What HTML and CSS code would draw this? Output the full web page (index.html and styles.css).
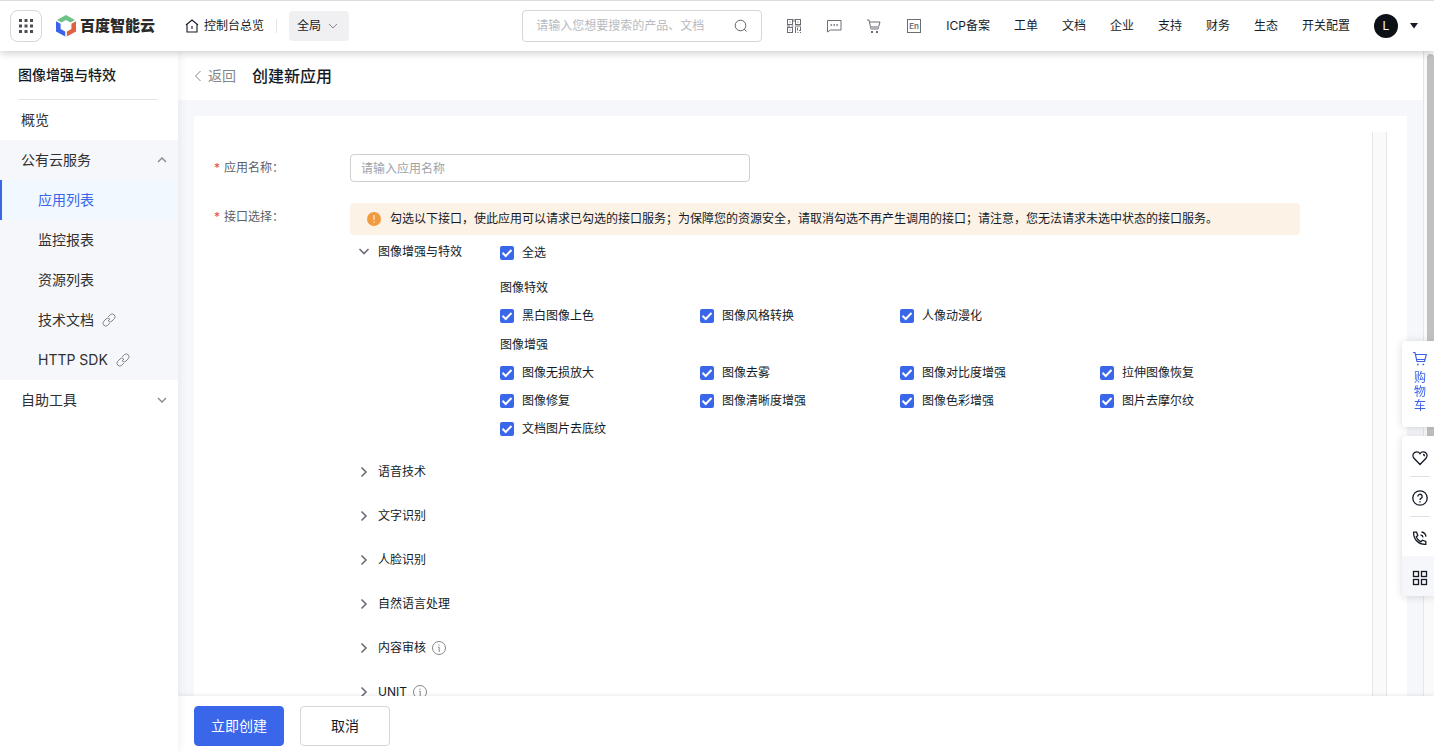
FILE: index.html
```html
<!DOCTYPE html>
<html lang="zh-CN">
<head>
    <meta charset="UTF-8">
    <meta name="viewport" content="width=device-width, initial-scale=1.0">
    <title>创建新应用 - 百度智能云</title>
    <link rel="stylesheet" href="styles.css">
</head>
<body>

<header class="header">
    <button class="apps-btn" type="button" aria-label="产品导航">
        <svg width="16" height="16" viewBox="0 0 16 16" fill="#4a4c52">
            <rect x="1" y="1" width="3" height="3"/><rect x="6.500" y="1" width="3" height="3"/><rect x="12" y="1" width="3" height="3"/>
            <rect x="1" y="6.500" width="3" height="3"/><rect x="6.500" y="6.500" width="3" height="3"/><rect x="12" y="6.500" width="3" height="3"/>
            <rect x="1" y="12" width="3" height="3"/><rect x="6.500" y="12" width="3" height="3"/><rect x="12" y="12" width="3" height="3"/>
        </svg>
    </button>
    <a href="#" class="logo">
        <svg width="20" height="22" viewBox="0 0 20 22">
            <path fill="#6cc287" d="M10 0l9 5-4.500 2.500L10 5 5.500 7.500 1 5z"/>
            <path fill="#3a62ea" d="M0 6.200l4.600 2.600v5.200L9.200 16.600v5L0 16.400z"/>
            <path fill="#e0603f" d="M20 6.200l-4.600 2.600v5.200l-4.600 2.600v5L20 16.400z"/>
        </svg>
        <span>百度智能云</span>
    </a>
    <a href="#" class="console-link">
        <svg width="14" height="14" viewBox="0 0 14 14" fill="none" stroke="#151b26" stroke-width="1.100">
            <path d="M1 6l6-5 6 5M2 5.500v7.500h10V5.500M7 7v3"/>
        </svg>
        控制台总览
    </a>
    <span class="header-line"></span>
    <button class="region-btn" type="button">
        全局
        <svg width="10" height="6" viewBox="0 0 10 6" fill="none" stroke="#84868c"><path d="M1 1l4 4 4-4"/></svg>
    </button>

    <div class="header-right">
        <div class="search">
            <input type="text" aria-label="搜索" placeholder="请输入您想要搜索的产品、文档">
            <svg width="14" height="14" viewBox="0 0 14 14" fill="none" stroke="#5c5f66"><circle cx="6.500" cy="6.500" r="5.300"/><path d="M10.300 10.300l2.200 2.200"/></svg>
        </div>
        <a href="#" aria-label="二维码">
            <svg width="16" height="16" viewBox="0 0 16 16" fill="none" stroke="#6b6e76">
                <rect x="1.500" y="1.500" width="5" height="5"/><rect x="9.500" y="1.500" width="5" height="5"/><rect x="1.500" y="9.500" width="5" height="5"/>
                <path d="M3.500 4h1M11.500 4h1M3.500 12h1M1 8h3M5.500 8h2M9 8h6M8 1v3M9.500 9v6M11.500 9.500v3M14.500 9v4M11.500 14.500h1M13 12.500h2M14.500 14v1"/>
            </svg>
        </a>
        <a href="#" aria-label="消息">
            <svg width="16" height="16" viewBox="0 0 16 16" fill="none" stroke="#6b6e76">
                <path d="M1.500 2.500h13.500v9.500H4.500l-3 2z"/><path stroke-width="1.600" d="M4.500 7h1.600M7.400 7h1.600M10.300 7h1.600"/>
            </svg>
        </a>
        <a href="#" aria-label="购物车">
            <svg width="16" height="16" viewBox="0 0 16 16" fill="none" stroke="#6b6e76">
                <path d="M1 2h2l2 9h7l2-7H3.500"/><path fill="#b0b2b7" stroke="none" d="M4.500 8h8.500l-1 3H5z"/><path stroke-width="2" d="M5 14h2M10 14h2"/>
            </svg>
        </a>
        <a href="#" aria-label="English">
            <svg width="16" height="16" viewBox="0 0 16 16" fill="none" stroke="#6b6e76">
                <rect x="1.500" y="1.500" width="13" height="13"/>
                <text x="8" y="11" text-anchor="middle" font-size="8" fill="#6b6e76" stroke="none" font-weight="600">En</text>
            </svg>
        </a>
        <a href="#">ICP备案</a>
        <a href="#">工单</a>
        <a href="#">文档</a>
        <a href="#">企业</a>
        <a href="#">支持</a>
        <a href="#">财务</a>
        <a href="#">生态</a>
        <a href="#">开关配置</a>
        <button class="user-btn" type="button" aria-label="账户">
            <span class="avatar">L</span>
            <svg width="10" height="6" viewBox="0 0 10 6" fill="#151b26"><path d="M1 0h8L5 5.500z"/></svg>
        </button>
    </div>
</header>

<div class="layout">
    <aside class="sidebar">
        <h2>图像增强与特效</h2>
        <nav>
            <a href="#" class="menu-item">概览</a>
            <div class="menu-group">
                <button type="button" class="menu-item">公有云服务
                    <svg width="10" height="6" viewBox="0 0 10 6" fill="none" stroke="#84868c" stroke-width="1.300"><path d="M1 5l4-4 4 4"/></svg>
                </button>
                <a href="#" class="sub-item active">应用列表</a>
                <a href="#" class="sub-item">监控报表</a>
                <a href="#" class="sub-item">资源列表</a>
                <a href="#" class="sub-item">技术文档
                    <svg width="14" height="14" viewBox="0 0 14 14" fill="none" stroke="#84868c"><path d="M6 4l2.200-2.200a2.700 2.700 0 0 1 4 4L10 8a2.700 2.700 0 0 1-3.500.300M8 10l-2.200 2.200a2.700 2.700 0 0 1-4-4L4 6a2.700 2.700 0 0 1 3.500-.300M6 8l2-2"/></svg>
                </a>
                <a href="#" class="sub-item">HTTP SDK
                    <svg width="14" height="14" viewBox="0 0 14 14" fill="none" stroke="#84868c"><path d="M6 4l2.200-2.200a2.700 2.700 0 0 1 4 4L10 8a2.700 2.700 0 0 1-3.500.300M8 10l-2.200 2.200a2.700 2.700 0 0 1-4-4L4 6a2.700 2.700 0 0 1 3.500-.300M6 8l2-2"/></svg>
                </a>
            </div>
            <button type="button" class="menu-item">自助工具
                <svg width="10" height="6" viewBox="0 0 10 6" fill="none" stroke="#84868c" stroke-width="1.300"><path d="M1 1l4 4 4-4"/></svg>
            </button>
        </nav>
    </aside>

    <main class="main">
        <div class="scroll-area">
            <div class="content">
                <div class="page-head">
                    <a href="#" class="back">
                        <svg width="8" height="12" viewBox="0 0 8 12" fill="none" stroke="#84868c"><path d="M6.500 1L1.500 6l5 5"/></svg>
                        返回
                    </a>
                    <h1>创建新应用</h1>
                </div>
                <div class="page-body">
                    <div class="panel">
                        <form class="app-form">
                            <div class="form-row">
                                <label class="form-label" for="app-name"><i>*</i>应用名称：</label>
                                <input class="name-input" id="app-name" type="text" placeholder="请输入应用名称">
                            </div>
                            <div class="form-row">
                                <span class="form-label"><i>*</i>接口选择：</span>
                                <div class="form-control">
                                    <p class="alert">
                                        <svg width="14" height="14" viewBox="0 0 14 14"><circle cx="7" cy="7" r="7" fill="#f19a40"/><path stroke="#fdf2e6" stroke-width="1.200" d="M7 3v5M7 9.500v1.300"/></svg>
                                        勾选以下接口，使此应用可以请求已勾选的接口服务；为保障您的资源安全，请取消勾选不再产生调用的接口；请注意，您无法请求未选中状态的接口服务。
                                    </p>
                                    <div class="api-group">
                                        <button type="button" class="api-title">
                                            <svg width="12" height="12" viewBox="0 0 12 12" fill="none" stroke="#6b6e76" stroke-width="1.600"><path d="M1.500 3l4.500 4.500L10.500 3"/></svg>
                                            图像增强与特效
                                        </button>
                                        <div class="api-list">
                                            <label class="check all"><input type="checkbox" checked>全选</label>
                                            <h4>图像特效</h4>
                                            <div class="checks">
                                                <label class="check"><input type="checkbox" checked>黑白图像上色</label>
                                                <label class="check"><input type="checkbox" checked>图像风格转换</label>
                                                <label class="check"><input type="checkbox" checked>人像动漫化</label>
                                            </div>
                                            <h4>图像增强</h4>
                                            <div class="checks">
                                                <label class="check"><input type="checkbox" checked>图像无损放大</label>
                                                <label class="check"><input type="checkbox" checked>图像去雾</label>
                                                <label class="check"><input type="checkbox" checked>图像对比度增强</label>
                                                <label class="check"><input type="checkbox" checked>拉伸图像恢复</label>
                                                <label class="check"><input type="checkbox" checked>图像修复</label>
                                                <label class="check"><input type="checkbox" checked>图像清晰度增强</label>
                                                <label class="check"><input type="checkbox" checked>图像色彩增强</label>
                                                <label class="check"><input type="checkbox" checked>图片去摩尔纹</label>
                                                <label class="check"><input type="checkbox" checked>文档图片去底纹</label>
                                            </div>
                                        </div>
                                    </div>
                                    <button type="button" class="api-title"><svg width="12" height="12" viewBox="0 0 12 12" fill="none" stroke="#6b6e76" stroke-width="1.600"><path d="M3.500 1.500L8 6l-4.500 4.500"/></svg>语音技术</button>
                                    <button type="button" class="api-title"><svg width="12" height="12" viewBox="0 0 12 12" fill="none" stroke="#6b6e76" stroke-width="1.600"><path d="M3.500 1.500L8 6l-4.500 4.500"/></svg>文字识别</button>
                                    <button type="button" class="api-title"><svg width="12" height="12" viewBox="0 0 12 12" fill="none" stroke="#6b6e76" stroke-width="1.600"><path d="M3.500 1.500L8 6l-4.500 4.500"/></svg>人脸识别</button>
                                    <button type="button" class="api-title"><svg width="12" height="12" viewBox="0 0 12 12" fill="none" stroke="#6b6e76" stroke-width="1.600"><path d="M3.500 1.500L8 6l-4.500 4.500"/></svg>自然语言处理</button>
                                    <button type="button" class="api-title"><svg width="12" height="12" viewBox="0 0 12 12" fill="none" stroke="#6b6e76" stroke-width="1.600"><path d="M3.500 1.500L8 6l-4.500 4.500"/></svg>内容审核
                                        <svg class="info" width="14" height="14" viewBox="0 0 14 14" fill="none" stroke="#84868c"><circle cx="7" cy="7" r="6.500"/><path d="M7 3.500v1.200M6 6.300h1.200V11"/></svg>
                                    </button>
                                    <button type="button" class="api-title"><svg width="12" height="12" viewBox="0 0 12 12" fill="none" stroke="#6b6e76" stroke-width="1.600"><path d="M3.500 1.500L8 6l-4.500 4.500"/></svg>UNIT
                                        <svg class="info" width="14" height="14" viewBox="0 0 14 14" fill="none" stroke="#84868c"><circle cx="7" cy="7" r="6.500"/><path d="M7 3.500v1.200M6 6.300h1.200V11"/></svg>
                                    </button>
                                </div>
                            </div>
                        </form>
                        <div class="panel-track"></div>
                    </div>
                </div>
            </div>
            <div class="page-track"><div class="page-thumb"></div></div>
        </div>
        <div class="action-bar">
            <button type="button" class="btn primary">立即创建</button>
            <button type="button" class="btn">取消</button>
        </div>
    </main>
</div>

<div class="float-tools">
    <a href="#" class="cart">
        <svg width="14" height="16" viewBox="0 0 14 16" fill="none" stroke="#3a62ea" stroke-width="1.200"><path d="M0 1.500h2l2 9h7.500L13.300 3.500H2.500M4 8.500h8"/><path stroke-width="1.600" d="M4 13.500h1.600M9.500 13.500h1.600"/></svg>
        <span>购</span><span>物</span><span>车</span>
    </a>
    <div class="tools">
        <a href="#" aria-label="收藏"><svg width="16" height="16" viewBox="0 0 16 16" fill="none" stroke="#151b26" stroke-width="1.300"><path d="M8 14.500L2 8.300C-.5 5 2 1.800 4.800 1.800c1.400 0 2.500.700 3.200 1.800.700-1.100 1.800-1.800 3.200-1.800C14 1.800 16.500 5 14 8.300zM11 4.500c1 0 1.500.800 1.500 1.700"/></svg></a>
        <a href="#" aria-label="帮助"><svg width="16" height="16" viewBox="0 0 16 16" fill="none" stroke="#151b26" stroke-width="1.300"><circle cx="8" cy="8" r="7.200"/><path d="M5.800 6.500a2.200 2.200 0 1 1 3.300 1.900c-.8.500-1.100.8-1.100 1.600M8 11.200v1.200"/></svg></a>
        <a href="#" aria-label="电话"><svg width="16" height="16" viewBox="0 0 16 16" fill="none" stroke="#151b26" stroke-width="1.300"><path d="M1.600 2.200h3l1.200 3.300-1.600 1.400c.8 2.300 2.600 4 4.700 4.900l1.500-1.600 3.400 1.300v2.800C7 14.900 1.300 9.500 1.600 2.200zM8.500 4.800c1.500.2 2.400 1.100 2.600 2.600M9.500 2c2.700.4 4.200 2 4.500 4.600"/></svg></a>
        <a href="#" class="grid" aria-label="更多"><svg width="16" height="16" viewBox="0 0 16 16" fill="none" stroke="#151b26" stroke-width="1.300"><rect x="1.500" y="1.500" width="5" height="5"/><rect x="9.500" y="1.500" width="5" height="5"/><rect x="1.500" y="9.500" width="5" height="5"/><rect x="9.500" y="9.500" width="5" height="5"/></svg></a>
    </div>
</div>

</body>
</html>
```

FILE: styles.css
```css
* {
    box-sizing: border-box;
}
body {
    margin: 0;
    height: 100vh;
    display: flex;
    flex-direction: column;
    overflow: hidden;
    font-family: Inter, "Noto Sans CJK SC", sans-serif;
    font-size: 12px;
    line-height: 20px;
    color: #151b26;
    background-color: #f6f7fa;
}
a {
    color: inherit;
    text-decoration: none;
}
button, input {
    font: inherit;
    color: inherit;
}
button {
    padding: 0;
    border: none;
    background: none;
    cursor: pointer;
}
svg {
    display: block;
    flex-shrink: 0;
}
h1, h2, h4, p {
    margin: 0;
}

/* header */
.header {
    position: relative;
    z-index: 3;
    display: flex;
    align-items: center;
    height: 51px;
    padding: 0 15px 0 10px;
    border-top: 1px solid #dcdcdc;
    background-color: #fff;
    box-shadow: 0 2px 8px rgba(0, 0, 0, 0.2);
    white-space: nowrap;
    flex-shrink: 0;
}
.apps-btn {
    display: flex;
    align-items: center;
    justify-content: center;
    width: 32px;
    height: 32px;
    border: 1px solid #d4d6d9;
    border-radius: 8px;
}
.logo {
    display: flex;
    align-items: center;
    gap: 4px;
    margin-left: 14px;
    font-size: 15px;
    font-weight: 900;
    color: #2b2b2b;
}
.console-link {
    display: flex;
    align-items: center;
    gap: 5px;
    margin-left: 30px;
}
.header-line {
    width: 1px;
    height: 14px;
    margin: 0 12px;
    background-color: #e4e5e8;
}
.region-btn {
    display: flex;
    align-items: center;
    gap: 7px;
    height: 30px;
    padding: 0 11px 0 8px;
    border-radius: 4px;
    background-color: #f0f0f2;
}
.header-right {
    display: flex;
    align-items: center;
    gap: 24px;
    margin-left: auto;
}
.search {
    display: flex;
    align-items: center;
    width: 240px;
    height: 32px;
    padding: 0 13px;
    border: 1px solid #d4d6d9;
    border-radius: 4px;
}
.search input {
    flex: 1;
    min-width: 0;
    padding: 0;
    border: none;
    outline: none;
}
.search input::placeholder {
    color: #b8babf;
}
.user-btn {
    display: flex;
    align-items: center;
    gap: 11px;
}
.avatar {
    width: 24px;
    height: 24px;
    border-radius: 50%;
    background-color: #0d1016;
    color: #fff;
    line-height: 24px;
}

/* sidebar */
.layout {
    display: flex;
    flex: 1;
    min-height: 0;
}
.sidebar {
    position: relative;
    z-index: 2;
    width: 178px;
    flex-shrink: 0;
    background-color: #fff;
    box-shadow: 0 0 10px rgba(0, 0, 0, 0.08);
    font-size: 14px;
    color: #303030;
}
.sidebar h2 {
    height: 49px;
    margin: 0 20px 0 18px;
    border-bottom: 1px solid #e4e5e8;
    font-size: 14px;
    font-weight: 500;
    line-height: 48px;
    color: #151b26;
}
.menu-item {
    display: flex;
    align-items: center;
    justify-content: space-between;
    width: 100%;
    height: 40px;
    padding: 0 11px 0 21px;
}
.menu-group {
    background-color: #f6f7fb;
}
.sub-item {
    display: flex;
    align-items: center;
    gap: 8px;
    height: 40px;
    padding-left: 38px;
}
.sub-item.active {
    padding-left: 36px;
    border-left: 2px solid #3a66ea;
    background-color: #f2f8ff;
    color: #3a66ea;
}

/* main */
.main {
    display: flex;
    flex-direction: column;
    flex: 1;
    min-width: 0;
}
.scroll-area {
    display: flex;
    flex: 1;
    min-height: 0;
    overflow: hidden;
}
.content {
    display: flex;
    flex-direction: column;
    flex: 1;
    min-width: 0;
}
.page-head {
    display: flex;
    align-items: center;
    gap: 16px;
    height: 49px;
    padding: 0 16px;
    background-color: #fff;
    flex-shrink: 0;
}
.back {
    display: flex;
    align-items: center;
    gap: 6px;
    font-size: 14px;
    color: #84868c;
}
.page-head h1 {
    font-size: 16px;
    font-weight: 500;
}
.page-body {
    display: flex;
    flex: 1;
    min-height: 0;
    padding: 16px 16px 0;
    background-color: #f6f7fa;
}
.panel {
    display: flex;
    flex: 1;
    min-width: 0;
    padding: 16px 20px 0;
    background-color: #fff;
}
.panel-track {
    width: 15px;
    border: 1px solid #e6e6e6;
    border-width: 0 1px;
    background-color: #fafafa;
}
.page-track {
    width: 11px;
    padding: 3px 0 0 3px;
    border-left: 1px solid #e6e6e6;
    background-color: #fafafa;
}
.page-thumb {
    height: 60%;
    border-radius: 4px 4px 0 0;
    background-color: #c1c1c1;
}

/* form */
.app-form {
    flex: 1;
    min-width: 0;
    padding-top: 22px;
}
.form-row {
    display: flex;
    align-items: flex-start;
    margin-bottom: 21px;
}
.form-label {
    width: 136px;
    padding-top: 4px;
    color: #5c5f66;
    flex-shrink: 0;
}
.form-label i {
    display: inline-block;
    width: 10px;
    font-style: normal;
    color: #e5484d;
}
.name-input {
    width: 400px;
    height: 28px;
    padding: 0 10px;
    border: 1px solid #cfcfd2;
    border-radius: 4px;
}
.name-input::placeholder {
    color: #a0a2a8;
}
.form-control {
    flex: 1;
    max-width: 950px;
}
.alert {
    display: flex;
    align-items: center;
    gap: 9px;
    min-height: 32px;
    padding: 0 17px;
    border-radius: 4px;
    background-color: #fdf2e6;
}
.api-title {
    display: flex;
    align-items: center;
    gap: 8px;
    height: 44px;
    padding-left: 8px;
}
.info {
    margin-left: -2px;
}
.api-group {
    display: flex;
    padding: 4px 0 7px;
}
.api-group .api-title {
    width: 150px;
    height: 26px;
}
.api-list {
    flex: 1;
}
.api-list h4 {
    padding-top: 1px;
    font-size: 12px;
    font-weight: 400;
    line-height: 28px;
}
.checks {
    display: grid;
    grid-template-columns: repeat(auto-fill, 200px);
}
.check {
    display: flex;
    align-items: center;
    gap: 8px;
    height: 28px;
}
.check.all {
    margin-bottom: 6px;
}
.check input {
    appearance: none;
    width: 14px;
    height: 14px;
    margin: 0;
    border: 1px solid #cfcfd2;
    border-radius: 2px;
}
.check input:checked {
    border: none;
    background: #3a66ea url("data:image/svg+xml,%3Csvg xmlns='http://www.w3.org/2000/svg' viewBox='0 0 14 14'%3E%3Cpath d='M2.500 6.800l3.200 3.200 5.800-6' fill='none' stroke='%23fff' stroke-width='2'/%3E%3C/svg%3E") center / 14px 14px no-repeat;
}

/* action bar */
.action-bar {
    position: relative;
    z-index: 1;
    display: flex;
    align-items: center;
    gap: 16px;
    height: 56px;
    padding: 4px 16px 0;
    background-color: #fff;
    box-shadow: 0 -1px 4px rgba(0, 0, 0, 0.08);
    flex-shrink: 0;
}
.btn {
    width: 90px;
    height: 40px;
    border: 1px solid #d4d6d9;
    border-radius: 4px;
    background-color: #fff;
    font-size: 14px;
}
.btn.primary {
    border-color: #3a66ea;
    background-color: #3a66ea;
    color: #fff;
}

/* floating tools on the right edge */
.float-tools {
    position: fixed;
    z-index: 4;
    right: 0;
    bottom: 156px;
    width: 32px;
}
.cart, .tools {
    display: flex;
    flex-direction: column;
    align-items: center;
    border-radius: 4px 0 0 4px;
    background-color: #fff;
    box-shadow: 0 1px 8px rgba(0, 0, 0, 0.15);
}
.cart {
    height: 86px;
    margin-bottom: 9px;
    padding: 10px 0 0 4px;
    line-height: 14px;
    color: #3a62ea;
}
.cart svg {
    margin-bottom: 4px;
}
.tools a {
    display: flex;
    align-items: center;
    justify-content: center;
    width: 20px;
    height: 40px;
    margin-left: 4px;
    padding-top: 3px;
    border-top: 1px solid #dfe0e3;
}
.tools a:first-child {
    border-top-color: transparent;
}
.tools .grid {
    width: 100%;
    margin: 0;
    padding-left: 4px;
    border-top: none;
    border-radius: 0 0 0 4px;
    background-color: #f6f7fa;
}
```
